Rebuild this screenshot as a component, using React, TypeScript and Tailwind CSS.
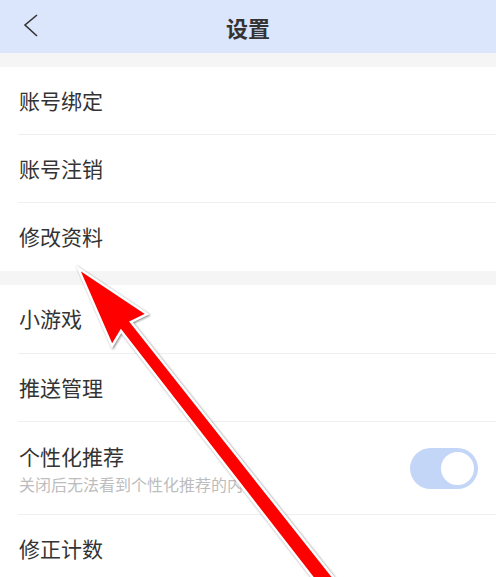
import React from "react";

const font = { fontFamily: '"Noto Sans CJK SC", "Noto Sans", sans-serif' };

function Row({ label, last }: { label: string; last?: boolean }) {
  return (
    <div
      className={`ml-[18px] h-[68px] flex items-center pl-px text-[21px] text-[#333] ${
        last ? "" : "border-b border-[#efefef]"
      }`}
    >
      {label}
    </div>
  );
}

export default function App() {
  return (
    <div className="relative w-[496px] h-[577px] overflow-hidden bg-white" style={font}>
      {/* header */}
      <div className="h-[53px] bg-[#dbe5fb] flex items-center relative">
        <svg className="absolute left-[22px] top-[13px]" width="20" height="26" viewBox="0 0 20 26">
          <path d="M15 2 L3 12 L15 23" fill="none" stroke="#333" strokeWidth="1.6" />
        </svg>
        <div className="flex-1 text-center text-[22px] font-bold text-[#333] leading-none">设置</div>
      </div>

      <div className="h-[14px] bg-[#f5f5f5]" />

      <div className="bg-white">
        <Row label="账号绑定" />
        <Row label="账号注销" />
        <Row label="修改资料" last />
      </div>

      <div className="h-[14px] bg-[#f5f5f5]" />

      <div className="bg-white">
        <div className="ml-[18px] h-[69px] flex items-center pl-px text-[21px] text-[#333] border-b border-[#efefef]">
          小游戏
        </div>
        <Row label="推送管理" />
        <div className="ml-[18px] h-[93px] flex items-center justify-between pl-px pr-[18px] border-b border-[#efefef]">
          <div className="flex flex-col">
            <span className="text-[21px] leading-[28px] text-[#333]">个性化推荐</span>
            <span className="text-[16px] leading-[22px] text-[#bdbdbd] mt-[3px]">关闭后无法看到个性化推荐的内容</span>
          </div>
          <div className="w-[68px] h-[41px] rounded-full bg-[#c3d6f7] flex items-center justify-end pr-[2px]">
            <div className="w-[37px] h-[37px] rounded-full bg-white border-2 border-[#c3d6f7]" />
          </div>
        </div>
        <Row label="修正计数" last />
      </div>

      {/* red arrow annotation */}
      <svg
        className="absolute inset-0 pointer-events-none drop-shadow-[1px_1px_1px_rgba(0,0,0,0.45)]"
        width="496"
        height="577"
        viewBox="0 0 496 577"
      >
        <polygon
          points="78,268 147,314 131,322 345,592 330,600 121,331 112,346"
          fill="#ff0000"
          stroke="#fff"
          strokeWidth="2.5"
          strokeLinejoin="miter"
        />
      </svg>
    </div>
  );
}
